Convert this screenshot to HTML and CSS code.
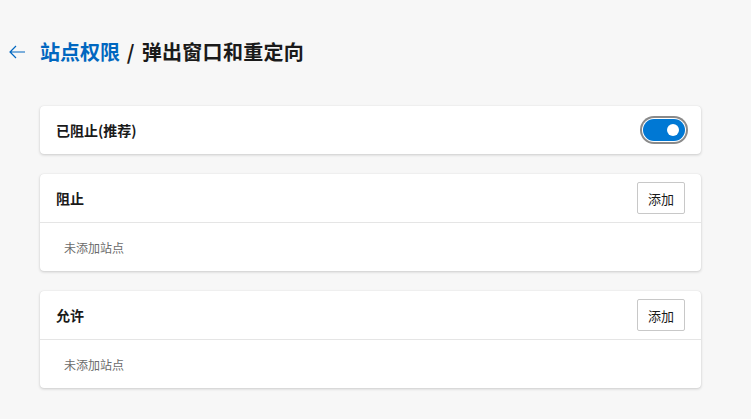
FILE: index.html
```html
<!DOCTYPE html>
<html lang="zh-CN">
<head>
<meta charset="utf-8">
<link rel="stylesheet" href="styles.css">
</head>
<body>
<div class="page">
  <header class="header">
    <span class="back">
      <svg width="18" height="14" viewBox="0 0 18 14"><path d="M8 1 L2 7 L8 13 M2 7 H17" fill="none" stroke="#0067c0" stroke-width="1.2"/></svg>
    </span>
    <h1 class="title"><span class="crumb">站点权限</span> / 弹出窗口和重定向</h1>
  </header>
  <main class="content">
    <section class="card row">
      <span class="label">已阻止(推荐)</span>
      <span class="toggle"><span class="knob"></span></span>
    </section>
    <section class="card">
      <div class="row head">
        <span class="label">阻止</span>
        <button class="btn">添加</button>
      </div>
      <div class="row empty">未添加站点</div>
    </section>
    <section class="card">
      <div class="row head">
        <span class="label">允许</span>
        <button class="btn">添加</button>
      </div>
      <div class="row empty">未添加站点</div>
    </section>
  </main>
</div>
</body>
</html>
```
FILE: styles.css
```css
html, body {
  margin: 0;
  padding: 0;
  background: #f7f7f7;
  font-family: "Noto Sans CJK SC", "Noto Sans", sans-serif;
  color: #1a1a1a;
}
.page {
  width: 751px;
  height: 419px;
  overflow: hidden;
}
.header {
  display: flex;
  align-items: center;
  height: 40px;
  margin-top: 32px;
}
.back {
  width: 40px;
  display: flex;
  justify-content: flex-start;
  padding-left: 8px;
  box-sizing: border-box;
}
.back svg { display: block; }
.title {
  margin: 0;
  font-size: 20px;
  font-weight: 700;
  line-height: 28px;
  color: #1a1a1a;
  word-spacing: 2px;
  letter-spacing: 0.3px;
}
.crumb { color: #0067c0; letter-spacing: 0; }
.content {
  margin: 34px 0 0 40px;
  width: 661px;
  display: flex;
  flex-direction: column;
  gap: 20px;
}
.card {
  background: #fff;
  border-radius: 4px;
  box-shadow: 0 1px 3px rgba(0,0,0,0.18), 0 0 1px rgba(0,0,0,0.1);
}
.row {
  display: flex;
  align-items: center;
  justify-content: space-between;
  height: 48px;
  padding: 0 13px 0 16px;
  box-sizing: border-box;
}
.head {
  height: 49px;
  padding-right: 16px;
  border-bottom: 1px solid #e5e5e5;
}
.label {
  font-size: 14px;
  font-weight: 600;
  color: #1a1a1a;
}
.empty {
  padding-left: 24px;
  font-size: 12px;
  color: #6b6b6b;
}
.btn {
  width: 48px;
  height: 32px;
  padding: 0;
  background: #fff;
  border: 1px solid #c8c8c8;
  border-radius: 2px;
  font-family: inherit;
  font-size: 13px;
  color: #1a1a1a;
}
.toggle {
  width: 42px;
  height: 22px;
  border-radius: 11px;
  background: #0078d4;
  box-shadow: 0 0 0 1px #fff, 0 0 0 3px #8a8a8a;
  display: flex;
  align-items: center;
  justify-content: flex-end;
  padding-right: 6px;
  box-sizing: border-box;
  margin-right: 3px;
}
.knob {
  width: 12px;
  height: 12px;
  border-radius: 50%;
  background: #fff;
}
```
